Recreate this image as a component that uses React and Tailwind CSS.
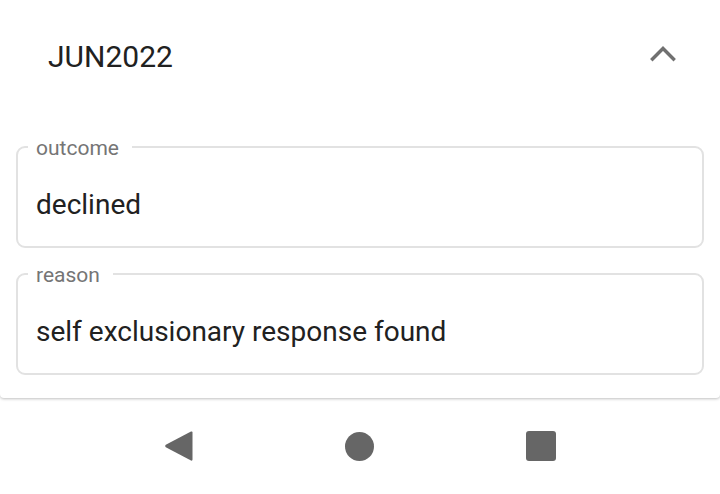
import React from 'react';

const font = { fontFamily: 'Roboto, "Noto Sans", sans-serif' };

function OutlinedField({ label, value }) {
  return (
    <div className="relative h-[102px] mx-4 border-2 border-[#e2e2e2] rounded-[9px] flex items-center px-[18px] pt-[16px]">
      {/* label sits over the top border */}
      <span className="absolute left-[10px] -top-[10px] bg-white pl-[8px] pr-[13px] text-[21px] leading-[21px] text-[#757575]">
        {label}
      </span>
      <span className="text-[28px] leading-[32px] text-[#212121]">{value}</span>
    </div>
  );
}

export default function App() {
  return (
    <div className="w-[720px] h-[494px] bg-white flex flex-col overflow-hidden" style={font}>
      {/* Accordion card */}
      <div className="h-[398px] flex flex-col bg-white rounded-b-[4px] shadow-[0_1px_3px_rgba(0,0,0,0.25)] z-10">
        {/* Header */}
        <div className="h-[114px] flex items-center justify-between pl-12 pr-[44px]">
          <span className="text-[30px] leading-[32px] text-[#212121]">JUN2022</span>
          <svg width="26" height="16" viewBox="0 0 26 16" className="mb-[6px]">
            <path d="M2.5 13 L13 2.5 L23.5 13" fill="none" stroke="#707070" strokeWidth="3.4" strokeLinecap="square" />
          </svg>
        </div>

        {/* Fields */}
        <div className="flex flex-col gap-[25px] mt-[32px]">
          <OutlinedField label="outcome" value="declined" />
          <OutlinedField label="reason" value="self exclusionary response found" />
        </div>
      </div>

      {/* Android nav bar */}
      <div className="flex-1 flex items-center justify-center gap-[152px] bg-white">
        <svg width="29" height="32" viewBox="0 0 29 32">
          <path d="M27 1.5 Q28.5 1 28.5 2.5 V29.5 Q28.5 31 27 30.5 L1.8 17.2 Q0.3 16 1.8 14.8 Z" fill="#666666" />
        </svg>
        <div className="w-[29px] h-[29px] rounded-full bg-[#666666]" />
        <div className="w-[30px] h-[30px] rounded-[3px] bg-[#666666]" />
      </div>
    </div>
  );
}
